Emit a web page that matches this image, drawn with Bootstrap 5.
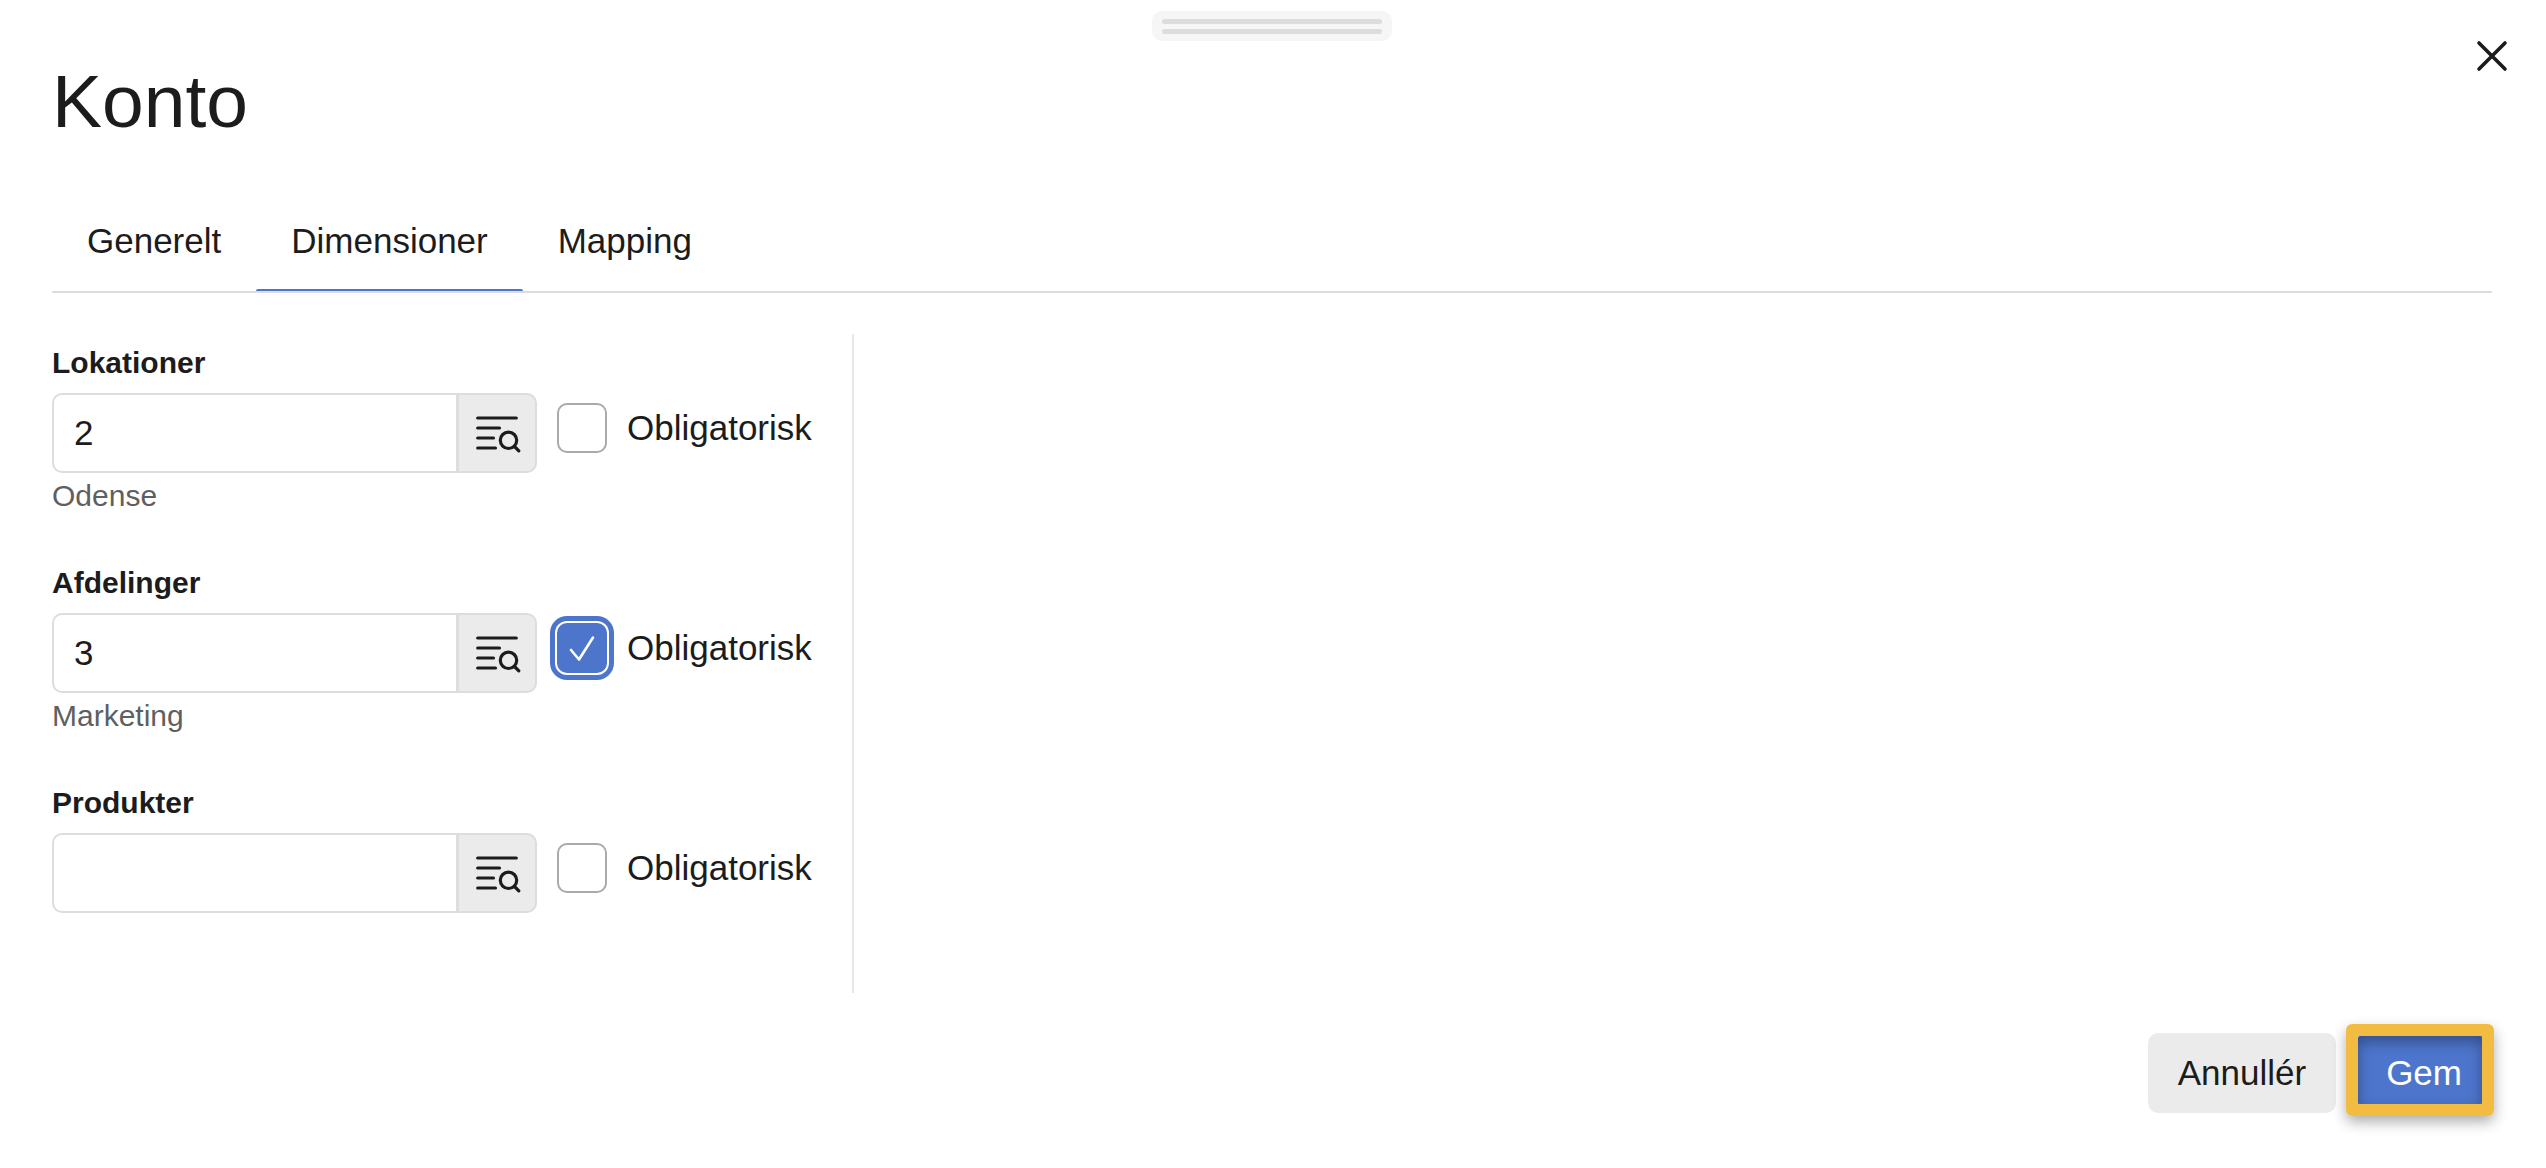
<!DOCTYPE html>
<html lang="da">
<head>
<meta charset="utf-8">
<meta name="viewport" content="width=device-width, initial-scale=1">
<title>Konto</title>
<link href="https://cdn.jsdelivr.net/npm/bootstrap@5.3.0/dist/css/bootstrap.min.css" rel="stylesheet">
<style>
  :root { --ink: #1c1c1c; --line: #ddd; --accent: #4d75cc; --soft: #ebebeb; }
  body { font-family: "Liberation Sans", Arial, sans-serif; font-size: 35px; line-height: 40px; color: var(--ink); background: #fff; }
  .dialog { padding: 11px 54px 55px 52px; }

  .drag-handle { width: 240px; height: 30px; padding: 8px 10px 0; gap: 5px; border-radius: 10px; background: #f6f6f6; }
  .drag-handle span { height: 5px; border-radius: 3px; background: var(--line); }
  .dialog-close { top: 36px; right: 34px; width: 40px; height: 40px; }
  .dialog-title { font-size: 75px; line-height: 88px; margin: 16px 0 48px; font-weight: 400; }

  .nav-tabs { --bs-nav-tabs-border-width: 2px; --bs-nav-tabs-border-color: var(--line); }
  .nav-tabs .nav-link { padding: 28px 35px 30px; margin: 0; border: 0; color: var(--ink); position: relative; }
  .nav-tabs .nav-link.active { color: var(--ink); background: none; }
  .nav-tabs .nav-link.active::after { content: ""; position: absolute; left: 0; right: 0; bottom: 0; height: 2px; border-radius: 2px 2px 0 0; background: var(--accent); }

  .dimensions { width: 802px; max-width: 100%; margin-top: 41px; padding-top: 12px; border-right: 2px solid #e8e8e8; }
  .dimension { margin-bottom: 53px; }
  .dimension .form-label { font-size: 30px; line-height: 34px; margin-bottom: 13px; font-weight: 700; }
  .dimension .form-text { font-size: 30px; line-height: 34px; margin-top: 6px; color: #5f5f5f; }
  .field-row { gap: 20px; }
  .lookup { width: 485px; height: 80px; }
  .lookup .form-control { font-size: 35px; line-height: 40px; padding: 0 20px; border: 2px solid var(--line); border-radius: 10px; color: var(--ink); }
  .lookup .btn { width: 80px; padding: 0; border: 2px solid var(--line); border-radius: 10px; background: var(--soft); color: var(--ink); }
  .lookup > .btn:last-child { margin-left: -2px; }
  .required { gap: 20px; margin-top: 10px; }
  .required .form-check-input { width: 50px; height: 50px; border: 2px solid #aaa; border-radius: 10px; }
  .required .form-check-input:checked {
    border-color: var(--accent); background-color: var(--accent); background-size: 50px 50px; background-origin: border-box;
    background-image: url("data:image/svg+xml,%3Csvg xmlns='http://www.w3.org/2000/svg' viewBox='0 0 50 50'%3E%3Cpath d='M14 27l8 9.500L36 14.500' fill='none' stroke='%23fff' stroke-width='2.600' stroke-linecap='round' stroke-linejoin='round'/%3E%3C/svg%3E");
    box-shadow: 0 0 0 2px #fff, 0 0 0 7px var(--accent);
  }

  .actions { gap: 20px; margin-top: 40px; }
  .actions .btn { font-size: 35px; line-height: 40px; padding: 20px 30px; border: 0; border-radius: 10px; }
  .btn-cancel { background: var(--soft); color: var(--ink); }
  .btn-save { background: var(--accent); color: #fff; }
  .highlight { position: absolute; inset: -9px -2px -3px -10px; border: 12px solid #f2bb41; border-radius: 6px; box-shadow: 0 6px 14px rgba(0,0,0,.32); pointer-events: none; }
  .highlight::before { content: ""; position: absolute; inset: 0; border-radius: 3px; box-shadow: inset 0 6px 14px rgba(0,0,0,.32); }
</style>
</head>
<body>
<svg class="d-none" aria-hidden="true">
  <symbol id="lookup-icon" viewBox="0 0 48 40">
    <g fill="none" stroke="currentColor" stroke-width="3.200" stroke-linecap="round">
      <path d="M4.700 5H43.300M4.700 15H26.500M4.700 25H20.500M4.700 35H22.500"/>
      <circle cx="35.500" cy="27.300" r="8.200"/>
      <path d="M41.500 33.500l4.300 4.300"/>
    </g>
  </symbol>
</svg>

<div class="dialog min-vh-100 d-flex flex-column position-relative">
  <div class="drag-handle d-flex flex-column mx-auto"><span></span><span></span></div>
  <button type="button" class="dialog-close btn p-0 border-0 position-absolute d-flex" aria-label="Luk">
    <svg width="40" height="40" viewBox="0 0 40 40" fill="none" stroke="#1c1c1c" stroke-width="3.600" stroke-linecap="round" aria-hidden="true"><path d="M7 7l26 26M33 7l-26 26"/></svg>
  </button>

  <h1 class="dialog-title">Konto</h1>

  <ul class="nav nav-tabs">
    <li class="nav-item"><a class="nav-link" href="#generelt">Generelt</a></li>
    <li class="nav-item"><a class="nav-link active" aria-current="page" href="#dimensioner">Dimensioner</a></li>
    <li class="nav-item"><a class="nav-link" href="#mapping">Mapping</a></li>
  </ul>

  <form class="d-flex flex-column flex-grow-1">
    <div class="dimensions flex-grow-1" id="dimensioner">
      <div class="dimension">
        <label class="form-label d-block" for="lokationer">Lokationer</label>
        <div class="field-row d-flex align-items-start">
          <div class="lookup input-group">
            <input type="text" class="form-control" id="lokationer" value="2">
            <button type="button" class="btn d-flex align-items-center justify-content-center" aria-label="Søg lokation"><svg width="48" height="40" aria-hidden="true"><use href="#lookup-icon"/></svg></button>
          </div>
          <div class="required d-flex align-items-center">
            <input type="checkbox" class="form-check-input m-0" id="lokationer-krav">
            <label for="lokationer-krav">Obligatorisk</label>
          </div>
        </div>
        <div class="form-text">Odense</div>
      </div>

      <div class="dimension">
        <label class="form-label d-block" for="afdelinger">Afdelinger</label>
        <div class="field-row d-flex align-items-start">
          <div class="lookup input-group">
            <input type="text" class="form-control" id="afdelinger" value="3">
            <button type="button" class="btn d-flex align-items-center justify-content-center" aria-label="Søg afdeling"><svg width="48" height="40" aria-hidden="true"><use href="#lookup-icon"/></svg></button>
          </div>
          <div class="required d-flex align-items-center">
            <input type="checkbox" class="form-check-input m-0" id="afdelinger-krav" checked>
            <label for="afdelinger-krav">Obligatorisk</label>
          </div>
        </div>
        <div class="form-text">Marketing</div>
      </div>

      <div class="dimension">
        <label class="form-label d-block" for="produkter">Produkter</label>
        <div class="field-row d-flex align-items-start">
          <div class="lookup input-group">
            <input type="text" class="form-control" id="produkter">
            <button type="button" class="btn d-flex align-items-center justify-content-center" aria-label="Søg produkt"><svg width="48" height="40" aria-hidden="true"><use href="#lookup-icon"/></svg></button>
          </div>
          <div class="required d-flex align-items-center">
            <input type="checkbox" class="form-check-input m-0" id="produkter-krav">
            <label for="produkter-krav">Obligatorisk</label>
          </div>
        </div>
      </div>
    </div>

    <div class="actions d-flex justify-content-end">
      <button type="button" class="btn btn-cancel">Annullér</button>
      <button type="submit" class="btn btn-save position-relative">Gem<span class="highlight"></span></button>
    </div>
  </form>
</div>
<script src="https://cdn.jsdelivr.net/npm/bootstrap@5.3.0/dist/js/bootstrap.bundle.min.js"></script>
</body>
</html>
